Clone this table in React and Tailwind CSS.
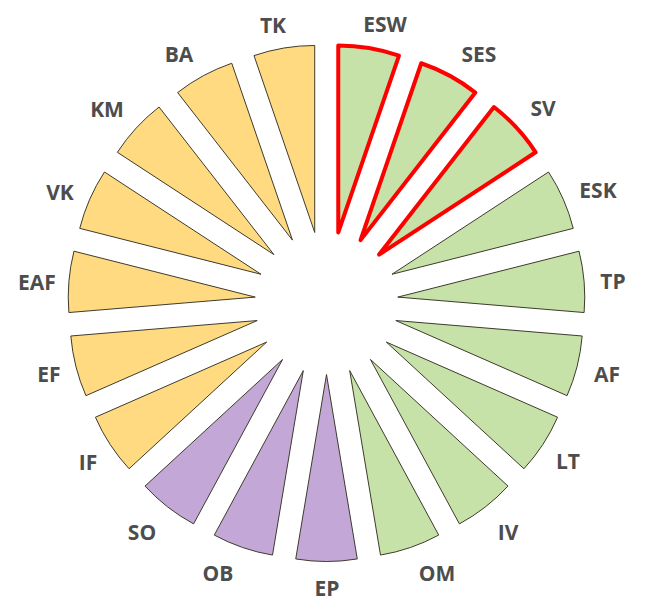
const CX = 326.5;
const CY = 303;
const OFFSET = 71.5;
const R = 187;
const N = 19;
const STEP = 360 / N;

const YELLOW = "#ffda80";
const GREEN = "#c6e2a8";
const PURPLE = "#c3a8d7";

// clockwise from the top, first slice sits right of 12 o'clock
const slices = [
  { name: "ESW", color: GREEN, hot: true, lx: 385, ly: 24 },
  { name: "SES", color: GREEN, hot: true, lx: 479, ly: 54 },
  { name: "SV", color: GREEN, hot: true, lx: 543, ly: 108 },
  { name: "ESK", color: GREEN, lx: 598, ly: 190 },
  { name: "TP", color: GREEN, lx: 613, ly: 281 },
  { name: "AF", color: GREEN, lx: 607, ly: 374 },
  { name: "LT", color: GREEN, lx: 568, ly: 461 },
  { name: "IV", color: GREEN, lx: 508, ly: 532 },
  { name: "OM", color: GREEN, lx: 437, ly: 573 },
  { name: "EP", color: PURPLE, lx: 327, ly: 588 },
  { name: "OB", color: PURPLE, lx: 218, ly: 573 },
  { name: "SO", color: PURPLE, lx: 142, ly: 532 },
  { name: "IF", color: YELLOW, lx: 88, ly: 462 },
  { name: "EF", color: YELLOW, lx: 49, ly: 374 },
  { name: "EAF", color: YELLOW, lx: 37, ly: 282 },
  { name: "VK", color: YELLOW, lx: 60, ly: 192 },
  { name: "KM", color: YELLOW, lx: 107, ly: 109 },
  { name: "BA", color: YELLOW, lx: 179, ly: 54 },
  { name: "TK", color: YELLOW, lx: 273, ly: 25 },
];

const rad = (deg) => (deg * Math.PI) / 180;
const polar = (x, y, r, deg) => [x + r * Math.sin(rad(deg)), y - r * Math.cos(rad(deg))];

function slicePath(i) {
  const mid = STEP / 2 + i * STEP;
  const [tx, ty] = polar(CX, CY, OFFSET, mid);
  const [x1, y1] = polar(tx, ty, R, mid - STEP / 2);
  const [x2, y2] = polar(tx, ty, R, mid + STEP / 2);
  return `M${tx} ${ty} L${x1} ${y1} A${R} ${R} 0 0 1 ${x2} ${y2} Z`;
}

const Slice = ({ i, s }) => (
  <path
    d={slicePath(i)}
    fill={s.color}
    stroke={s.hot ? "#ff0000" : "#3d3b2c"}
    strokeWidth={s.hot ? 4 : 1}
    strokeLinejoin={s.hot ? "round" : "miter"}
  />
);

export default function App() {
  return (
    <div className="w-[647px] h-[600px] bg-white overflow-hidden">
      <svg width="647" height="600" viewBox="0 0 647 600" className="block">
        {slices.map((s, i) => (!s.hot ? <Slice key={s.name} i={i} s={s} /> : null))}
        {slices.map((s, i) => (s.hot ? <Slice key={s.name} i={i} s={s} /> : null))}
        {slices.map((s) => (
          <text
            key={s.name + "-label"}
            x={s.lx}
            y={s.ly + 7.5}
            textAnchor="middle"
            fill="#4d4d4d"
            className="font-bold text-[21px] font-['Open_Sans',sans-serif]"
          >
            {s.name}
          </text>
        ))}
      </svg>
    </div>
  );
}
